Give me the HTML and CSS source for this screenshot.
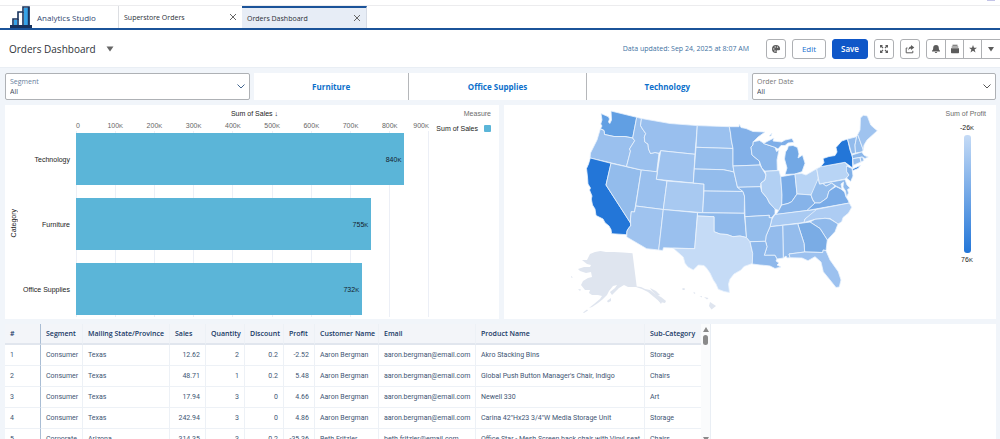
FILE: index.html
```html
<!DOCTYPE html>
<html lang="en">
<head>
<meta charset="utf-8">
<title>Orders Dashboard</title>
<link rel="stylesheet" href="styles.css">
</head>
<body>
<div class="app">
  <div class="topstrip"><span class="avatar"></span></div>
  <nav class="tabs">
    <a class="brand" href="#">
      <svg class="logo" viewBox="0 0 22 22"><path d="M3 19v-6h5v-7h5v-5h6v18" fill="#fff" stroke="#17325c" stroke-width="1.6"/><path d="M4 14h3v5H4zM14 2h4v17h-4z" fill="#36a3e8"/><path d="M8 13v6M13 6v13M18.6 1v19" stroke="#17325c" stroke-width="1.6"/><path d="M0 20.5h22" stroke="#17325c" stroke-width="3"/></svg>
      <span>Analytics Studio</span>
    </a>
    <div class="tab"><a href="#">Superstore Orders</a><button class="close" aria-label="Close Superstore Orders"><svg viewBox="0 0 8 8"><path d="M1 1l6 6M7 1l-6 6"/></svg></button></div>
    <div class="tab tab-active"><a href="#">Orders Dashboard</a><button class="close" aria-label="Close Orders Dashboard"><svg viewBox="0 0 8 8"><path d="M1 1l6 6M7 1l-6 6"/></svg></button></div>
  </nav>
  <header class="header">
    <h1>Orders Dashboard</h1>
    <button class="caret" aria-label="Dashboard menu"><svg viewBox="0 0 8 6"><path d="M.5.5h7L4 5.5z"/></svg></button>
    <span class="updated">Data updated: Sep 24, 2025 at 8:07 AM</span>
    <div class="actions">
      <button class="btn icon" aria-label="Theme"><svg viewBox="0 0 10 10"><path fill-rule="evenodd" d="M5 1a4 4 0 1 0 0 8c1 0 1-.7.7-1.3C5.300 6.900 6 6.200 6.800 6.300c1.300.2 2.300-.2 2.300-1.400C9.100 2.700 7.300 1 5 1zM2.800 4.200a.7.700 0 1 1 0 1.400.7.700 0 0 1 0-1.400zM4.200 2.200a.7.700 0 1 1 0 1.400.7.700 0 0 1 0-1.400zM6.500 2.400a.7.700 0 1 1 0 1.400.7.700 0 0 1 0-1.400zM4 6.300a.7.700 0 1 1 0 1.400.7.700 0 0 1 0-1.400z"/></svg></button>
      <button class="btn edit">Edit</button>
      <button class="btn save">Save</button>
      <button class="btn icon" aria-label="Full screen"><svg viewBox="0 0 10 10"><path d="M1 1h3L1 4zM9 1v3L6 1zM1 9V6l3 3zM9 9H6l3-3z"/><path d="M2 2l2 2M8 2L6 4M2 8l2-2M8 8L6 6" stroke="#5c5c5c" stroke-width="1.200"/></svg></button>
      <button class="btn icon" aria-label="Share"><svg viewBox="0 0 10 10"><path d="M2.500 4H1.200v4.800h6.600V6.800" fill="none" stroke="#5c5c5c"/><path d="M6 1l3.300 2.500L6 6V4.500C4.500 4.500 3.800 5.300 3.400 6.600 3.200 4 4.300 2.700 6 2.500z"/></svg></button>
      <div class="group">
        <button class="icon" aria-label="Notifications"><svg viewBox="0 0 10 10"><path d="M5 1c1.900 0 2.800 1.300 2.800 3 0 1.600.5 2 1.200 2.700V7.500H1V6.700C1.700 6 2.200 5.600 2.200 4c0-1.700.9-3 2.800-3zM3.800 8h2.400C6 9.300 4 9.300 3.800 8z"/></svg></button>
        <button class="icon" aria-label="Collections"><svg viewBox="0 0 10 10"><path d="M2.500.8h5v1h-5zM1.700 2.500h6.600v1H1.700zM1 4.200h8v4.300q0 .7-.7.700H1.700Q1 9.200 1 8.500z"/></svg></button>
        <button class="icon" aria-label="Favorite"><svg viewBox="0 0 10 10"><path d="M5 1l1 2.800h3L6.600 5.500l.9 3L5 6.800l-2.500 1.700.9-3L1 3.800h3z"/></svg></button>
        <button class="icon" aria-label="More"><svg viewBox="0 0 10 10"><path d="M2 3h6L5 7.500z"/></svg></button>
      </div>
    </div>
  </header>
  <main class="main">
    <section class="filters">
      <div class="select segment">
        <label for="segment">Segment</label>
        <select id="segment"><option>All</option></select>
        <svg class="chevron" viewBox="0 0 8 5"><path d="M.5.5L4 4 7.500.5"/></svg>
      </div>
      <div class="toggles">
        <button>Furniture</button><button>Office Supplies</button><button>Technology</button>
      </div>
      <div class="select date">
        <label for="date">Order Date</label>
        <select id="date"><option>All</option></select>
        <svg class="chevron" viewBox="0 0 8 5"><path d="M.5.5L4 4 7.500.5"/></svg>
      </div>
    </section>
    <section class="charts">
      <article class="card sales">
        <div class="ytitle"><span>Category</span></div>
        <div class="cats"><span>Technology</span><span>Furniture</span><span>Office Supplies</span></div>
        <div class="plotcol">
          <div class="xtitle">Sum of Sales&nbsp;↓</div>
          <div class="ticks"><span>0</span><span>100<i>K</i></span><span>200<i>K</i></span><span>300<i>K</i></span><span>400<i>K</i></span><span>500<i>K</i></span><span>600<i>K</i></span><span>700<i>K</i></span><span>800<i>K</i></span><span>900<i>K</i></span></div>
          <div class="plot">
            <div class="bar" style="width:93.300%">840<i>K</i></div>
            <div class="bar" style="width:83.900%">755<i>K</i></div>
            <div class="bar" style="width:81.300%">732<i>K</i></div>
          </div>
        </div>
        <div class="legend"><span class="legend-title">Measure</span><span class="legend-item">Sum of Sales<b class="swatch"></b></span></div>
      </article>
      <article class="card profit">
        <svg class="map" viewBox="568 108 312 208" role="img" aria-label="Sum of Profit by state">
          <g class="states">
            <path fill="#619fe3" d="M601 113.500L608.500 116.800 609.500 119 608.500 122 609.800 123.500 611.500 120 611 111 636.700 117.300 632.700 138 625 136.500 614 136.500 607 135 604.500 134.500 604 130.500 600.500 128.500 602 126 600.700 124 602 120z"/>
            <path d="M600.300 129L604 130.500 604.500 134.500 607 135 614 136.500 625 136.500 632.700 138 634.700 140.700 629.500 149 630.500 151 626.500 166.500 590 158 590.500 153 597 140z"/>
            <path fill="#2376d8" d="M590.300 158L611 163.300 606 185 630.700 223.300 630.700 226 629 227.500 627 231 626.700 234.700 611.700 233.700 611 229.500 609 226 605 222.700 603 219 596 215.500 595 209 592.500 205 591.300 199 592 196 589.500 190 590.500 188 588 184 587.500 177 586.500 168.500 588.500 164z"/>
            <path fill="#93bcec" d="M611 163.300L641.300 170 634.500 212 631.300 211.700 630.500 219 630.700 223.300 606 185z"/>
            <path d="M636.700 117.300L641.500 118.500 640.500 125.500 642.500 129 645.700 133.500 644.300 137 644.800 142 648 144 648.500 149 650.500 153.500 655 152.500 659 153.300 656.700 172 641.300 170 626.500 166.500 630.500 151 629.500 149 634.700 140.700 632.700 138z"/>
            <path fill="#99bfee" d="M641.500 118.500L670 123.500 697.300 125.600 695 154.300 660.700 150.700 659.300 153.300 655 152.500 650.500 153.500 648.500 149 648 144 644.800 142 644.300 137 645.700 133.500 642.500 129 640.500 125.500z"/>
            <path fill="#9fc3ef" d="M660.700 150.700L695 154.300 693.300 183 656.300 179.300z"/>
            <path d="M641.300 170L657.300 171.800 656.300 179.300 667 181 663.300 209.500 635.700 206z"/>
            <path fill="#a8c9f1" d="M667 181L704 184 702.700 212.700 663.300 209.500z"/>
            <path fill="#9fc3ef" d="M635.700 206L663.300 209.500 658.700 250 646.700 248.700 626.700 237 627 231 629 227.500 630.700 226 630.500 219 631.300 211.700 634.500 212z"/>
            <path d="M663.300 209.500L697.500 212.700 694.700 248.700 663.500 247.700 662.700 250.500 658.700 250z"/>
            <path fill="#9bc1ef" d="M697.300 125.600L729.300 126.700 730.500 133 731.300 140 733 148.500 696 147.300z"/>
            <path fill="#95bdec" d="M696 147.300L733 148.500 733 166 734 172 729.500 171 723.300 169.700 694.300 169z"/>
            <path fill="#93bcec" d="M694.300 169L723.300 169.700 729.500 171 734 172 737.500 187.300 743 191.500 704 191 704 184 693.300 183z"/>
            <path d="M704 191L743 191.500 744.500 196 744.300 213.300 702.700 212.700z"/>
            <path fill="#8fb9eb" d="M697.500 212.700L744.300 213.300 746.500 237.500 740 236 733 236.700 727 234.500 720 234 714 231.700 714 216.700 697.500 216z"/>
            <path fill="#c5dbf6" d="M697.500 216L714 216.700 714 231.700 720 234 727 234.500 733 236.700 740 236 746.500 237.500 750 241.700 752.700 253.300 752.300 263.500 744 266.500 741 270 734 274 730 279 728.500 284 729.500 292.500 724 291.500 718.300 289.300 716 284 713.300 280 710 273 706.700 268.300 704 265.500 698.300 265 693.300 270 688 267 685 263.300 683.300 257 673.300 248.300 694.700 248.700z"/>
            <path fill="#82b0e8" d="M729.300 126.700L739 126.700 739.300 124 741 127.500 746 128.500 753 131.500 765 132 758 137 753.300 141.700 753 145 751 147 752 155 759.300 161 760 165 733 166 733 148.500 731.300 140 730.500 133z"/>
            <path fill="#8ab6ea" d="M753.300 141.700L759.500 140.500 765 144 775 147.300 776.500 151.500 779 150 777 160 777.300 170.500 765 171.300 761.700 168 759.300 161 752 155 751 147 753 145z"/>
            <path fill="#7eaee8" d="M763.500 143.500L768 141 774 138 773 141 781.700 142 785 140 792 138.500 794 142.300 788 143 785 145.500 781 145.500 778 149 775 147.300zM769 136L772 133 771 136z"/>
            <path fill="#72a8e5" d="M788.300 146L793 145.500 797.500 147.500 799 154 798 158 802.500 155 805 163.300 802 171.700 795 174 785 174.500 787 168 784.500 159 785.500 152 787.500 149z"/>
            <path d="M733 166L760 165 761.700 168 766 175 765 180 761 183 760.500 186.700 737.500 187.300 734 172z"/>
            <path fill="#89b5ea" d="M737.500 187.300L760.500 186.700 761.700 191.700 767 198 769.500 203 775 208.500 775 213.500 771.500 218 769 217.500 769.300 215.300 745 216.700 744.500 196 743 191.500z"/>
            <path fill="#b2d0f3" d="M765 171.300L779 170.500 780.700 176.700 782 195 781.700 204 779 210.500 775 209 769.500 203 767 198 761.700 191.700 761 183 765 180 766 175z"/>
            <path fill="#7aace7" d="M780.700 176.700L795 174.300 797 194 791.700 201.700 788 203.500 781.700 205 782 195z"/>
            <path fill="#b8d4f5" d="M795 174L801.700 173.500 806 175 816.700 168.700 818.300 178.300 817 185 811 195 805 194.500 797 194z"/>
            <path fill="#86b3e9" d="M776 214.500L779 210 781.700 205 788 203.500 791.700 201.700 797 194 805 194.500 811 195 812.700 200 815 203 807 210.500z"/>
            <path fill="#a9caf2" d="M775 214.500L816.700 209.300 814 213 805 219 804 222.500 770 226.700 772 219z"/>
            <path fill="#93bcec" d="M818.300 178.300L819.500 184 823 183.500 826 186 831.700 183 835 186 829 191 827 198 820 203 815 203 812.700 199.500 811 195z"/>
            <path fill="#79abe7" d="M807 210.500L815 203 820 203 827 198 829 191 836 186.500 841 189 844.500 192 846 197 848 200 849.300 203z"/>
            <path fill="#adccf3" d="M816.700 209.300L849.300 203 851.700 207.300 848.500 213 843 217.500 841.700 221.700 838 224 830 218.500 825 218.300 815 219.300 804 222.500 805 219z"/>
            <path fill="#8fb9eb" d="M810 222L815 219.300 825 218.300 830 219 838 224 835 231.700 827.300 240 820 228.500z"/>
            <path fill="#7aace5" d="M797.700 223.700L810 222 820 228.500 827.300 240 826 250.700 823.300 250 822.700 252.500 804.700 252 804 243.300z"/>
            <path fill="#94bcec" d="M782.700 225.300L797.700 223.700 804 243.300 804.700 252 789 254 790 257.700 787 258 786 256 783.300 258z"/>
            <path fill="#93bbec" d="M770 226.700L782.700 225.300 783.300 258 777 259 775 255.300 764.300 255.300 767 246.700 765.500 241 766 236z"/>
            <path fill="#94bdec" d="M745 216.700L769.300 215.300 769 217.500 772 218 770 226.700 766 236 765.500 241.300 750 241.700 746.500 237.500z"/>
            <path fill="#8eb8eb" d="M750 241.700L765.500 241.300 767 246.700 764.300 255.300 775 255.300 777 259 776 261 779 263 777 265 781 267 775 268.500 770 266 766 265.500 760 265 752.300 264 752.700 253.300z"/>
            <path fill="#9cc1ef" d="M789 254L804.700 252 822.700 252.500 823.300 250 826 250.700 830 260 838.300 271.700 841 280 839.300 287 836 287.500 830 280 823.300 271.700 821 262 815 256.700 808 260.700 802 258 790 257.700z"/>
            <path fill="#b8d4f5" d="M816.700 168.700L820.700 166.700 845 162.300 848 166 846.700 171.700 849 175 845 179 819.500 184z"/>
            <path fill="#2376d8" d="M820.700 166.700L824 162.500 823 158.500 829 156.500 835 155.500 837 152 836 147.500 841.700 141 847.500 139 850 150 852.500 157 852.700 168 845 162.300zM852.500 169L860.500 165.500 858 168.500 853 170.500z"/>
            <path fill="#82b1e8" d="M846.500 166L852 168.500 853 176 850.700 181.500 846.500 178 849 175 846.700 171.700z"/>
            <path fill="#8fb9eb" d="M823 183.500L845 179.500 847 185 850 188 847.500 189.500 848.500 193 846.500 197 845.500 191 843 187 843.500 182 841 184 842 189 836 186 831.700 183 826 186z"/>
            <path fill="#92bbec" d="M847.500 139L856.700 136.700 855 145 855.500 153 851.700 154z"/>
            <path fill="#95bdec" d="M856.700 136.700L857.700 134.500 863.300 150 861.700 152 855.500 153 855 145z"/>
            <path fill="#9fc3ef" d="M857.700 134.500L860 130 860.500 118 863.300 115.200 867.300 116 870.700 125 874 128 877.300 130.700 872 135.500 867 140 864 145 863.300 150z"/>
            <path fill="#8cb7ea" d="M852 155L861.700 152 864.300 155.500 868.300 157 865 158.500 862 157 852.700 158.700z"/>
            <path fill="#98bfed" d="M852.700 158.700L860 157.500 861 162 853.300 165.300zM860 157.500L862.500 157 864 160.500 861 162z"/>
          </g>
          <g fill="#dfe5ef">
            <path d="M590 254L595 252 600.500 251 606 252 614 252 623 252.500 632.500 253.300 636.700 286.500 641 287 645 289 650 290 655 294 661 297 666 301 665 303 660 302 654 297 648 292 642 289 636 287 628 287 624 285 619 288 616 291 612 295 610 292 615 288 617 285 613 286 609 291 607 295 603 299 598 303 592 307 589 308 594 304 600 299 602 296 598 295 592 295 589 293 590 290 585 290 581 285 583 281 588 278 592 277 591 272 586 273 580 271 578 269 584 267 590 267 591 265 587 264 582 260 587 260 588 258z"/>
            <path d="M583 312.500L587 309.500 588 310.500 584 313zM607 301L611 298 611 301 608 302.500zM578 289L581 289.500 580 291zM571 276L573 277.500 571 277.500zM650 288L656 291 660 295 657 296 652 291zM658 300L662 302 661 304z"/>
            <path d="M682.500 288L685 288.500 684.500 290 682.500 290zM693.500 291.700L695.500 293 694 294zM699.500 296L702 296.300 702 297.500zM704 297L708.500 298 707 299.500zM710 302L716 306 711.500 309.500 709 306z"/>
          </g>
        </svg>
        <div class="scale"><span class="legend-title">Sum of Profit</span><div class="scale-body"><span>-26<i>K</i></span><div class="ramp"></div><span>76<i>K</i></span></div></div>
      </article>
    </section>
    <section class="card tablecard">
      <table>
        <colgroup><col class="c36"><col class="c42"><col class="c87"><col class="c36"><col class="c39"><col class="c39"><col class="c31"><col class="c64"><col class="c97"><col class="c169"><col class="c56"></colgroup>
        <thead><tr><th>#</th><th>Segment</th><th>Mailing State/Province</th><th>Sales</th><th class="n">Quantity</th><th class="n">Discount</th><th>Profit</th><th>Customer Name</th><th>Email</th><th>Product Name</th><th>Sub-Category</th></tr></thead>
        <tbody>
          <tr><td>1</td><td>Consumer</td><td>Texas</td><td class="n">12.62</td><td class="n">2</td><td class="n">0.2</td><td class="n">-2.52</td><td>Aaron Bergman</td><td>aaron.bergman@email.com</td><td>Akro Stacking Bins</td><td>Storage</td></tr>
          <tr><td>2</td><td>Consumer</td><td>Texas</td><td class="n">48.71</td><td class="n">1</td><td class="n">0.2</td><td class="n">5.48</td><td>Aaron Bergman</td><td>aaron.bergman@email.com</td><td>Global Push Button Manager's Chair, Indigo</td><td>Chairs</td></tr>
          <tr><td>3</td><td>Consumer</td><td>Texas</td><td class="n">17.94</td><td class="n">3</td><td class="n">0</td><td class="n">4.66</td><td>Aaron Bergman</td><td>aaron.bergman@email.com</td><td>Newell 330</td><td>Art</td></tr>
          <tr><td>4</td><td>Consumer</td><td>Texas</td><td class="n">242.94</td><td class="n">3</td><td class="n">0</td><td class="n">4.86</td><td>Aaron Bergman</td><td>aaron.bergman@email.com</td><td>Carina 42"Hx23 3/4"W Media Storage Unit</td><td>Storage</td></tr>
          <tr><td>5</td><td>Corporate</td><td>Arizona</td><td class="n">314.35</td><td class="n">3</td><td class="n">0.2</td><td class="n">-35.36</td><td>Beth Fritzler</td><td>beth.fritzler@email.com</td><td>Office Star - Mesh Screen back chair with Vinyl seat</td><td>Chairs</td></tr>
        </tbody>
      </table>
      <div class="scroll"><svg viewBox="0 0 6 5"><path d="M3 0l3 5H0z"/></svg><div class="thumb"></div><svg class="down" viewBox="0 0 6 5"><path d="M0 0h6L3 5z"/></svg></div>
    </section>
  </main>
</div>
</body>
</html>
```
FILE: styles.css
```css
* { box-sizing: border-box; }
body { margin: 0; font-family: "Open Sans", "Noto Sans", sans-serif; font-size: 8px; color: #3e5573; background: #f1f5fa; }
button, select { font: inherit; color: inherit; margin: 0; padding: 0; border: 0; background: none; }
a { color: inherit; text-decoration: none; }
svg { display: block; }
i { font-style: normal; font-size: 6px; }
.app { height: 100vh; overflow: hidden; display: flex; flex-direction: column; }
.topstrip { height: 6px; flex: none; background: #fff; border-bottom: 1px solid #ececee; display: flex; justify-content: flex-end; padding-right: 5px; }
.avatar { width: 8px; height: 1px; background: #c3c4e8; }
.tabs { height: 24px; flex: none; background: #fff; border-bottom: 2px solid #1b5399; display: flex; }
.brand { width: 118px; padding-left: 10px; display: flex; align-items: center; gap: 5px; color: #32476f; }
.logo { width: 22px; height: 22px; }
.tab { width: 124px; display: flex; align-items: center; justify-content: space-between; padding: 0 5px; border-left: 1px solid #dcdee2; color: #2b2f36; font-size: 7px; }
.tab-active { width: 125px; background: #e7edf6; border-left: 0; border-top: 2px solid #1b5399; border-right: 1px solid #d5dbe5; }
.close svg { width: 8px; height: 8px; stroke: #666; fill: none; }
.header { height: 38px; flex: none; background: #fff; display: flex; align-items: center; padding-left: 9px; border-bottom: 1px solid #e9eef4; }
h1 { margin: 0; font-size: 10px; font-weight: 400; color: #2f3338; }
.caret { margin-left: 10px; }
.caret svg { width: 8px; height: 6px; fill: #666; }
.updated { margin-left: auto; color: #41719f; font-size: 7px; }
.actions { display: flex; gap: 6px; margin-left: 17px; }
.btn, .group { height: 20px; border: 1px solid #aeb0b3; border-radius: 3px; }
.btn.icon { width: 20px; }
.icon { display: flex; align-items: center; justify-content: center; }
.icon svg { width: 10px; height: 10px; fill: #5c5c5c; }
.edit { width: 34px; color: #1c6fd0; }
.save { width: 36px; color: #fff; background: #0f57c8; border-color: #0f57c8; font-weight: 600; }
.group { display: flex; margin-right: -1px; border-radius: 3px 0 0 3px; }
.group .icon { width: 18px; }
.group .icon:last-child { width: 19px; }
.group .icon + .icon { border-left: 1px solid #aeb0b3; }
.main { flex: 1; min-height: 0; padding: 5px 4px 0 5px; display: flex; flex-direction: column; gap: 5px; }
.filters { display: grid; grid-template-columns: 245fr 494fr 244fr; gap: 4px; height: 27px; flex: none; }
.select { position: relative; background: #fff; border: 1px solid #aeb1b5; border-radius: 2px; padding: 3px 4px; display: flex; flex-direction: column; justify-content: center; }
.select label { font-size: 7px; line-height: 10px; color: #67809d; }
.date label { color: #777; }
.select select { appearance: none; font-size: 7px; line-height: 9px; height: 9px; width: 100%; color: #444c58; }
.chevron { position: absolute; right: 4px; top: 10px; width: 8px; height: 5px; fill: none; stroke: #42658e; pointer-events: none; }
.date .chevron { stroke: #555; }
.toggles { display: grid; grid-template-columns: 154fr 177fr 162fr; background: #fff; }
.toggles button { color: #0c6fcb; font-weight: 700; }
.toggles button + button { border-left: 1px solid #b5b7ba; }
.charts { display: grid; grid-template-columns: 494fr 492fr; gap: 5px; height: 214px; flex: none; }
.card { background: #fff; min-width: 0; }
.sales, .profit { display: flex; font-family: "Liberation Sans", sans-serif; font-size: 7px; color: #222; }
.ytitle { width: 16px; display: flex; align-items: center; justify-content: center; padding-top: 23px; }
.ytitle span { writing-mode: vertical-rl; transform: rotate(180deg); }
.cats { width: 49px; margin-right: 6px; padding-top: 28px; height: 210px; display: grid; grid-template-rows: repeat(3, 52px); gap: 13px; align-items: center; justify-items: end; white-space: nowrap; }
.plotcol { flex: 1; display: flex; flex-direction: column; }
.xtitle { text-align: center; height: 16px; line-height: 17px; padding-left: 4px; }
.ticks { display: flex; justify-content: space-between; color: #666; height: 10px; line-height: 10px; }
.ticks span { width: 0; display: flex; justify-content: center; align-items: baseline; }
.ticks span:first-child { justify-content: flex-start; }
.ticks span:last-child { justify-content: flex-end; }
.plot { margin-bottom: 2px; padding-top: 2px; flex: 1; display: flex; flex-direction: column; gap: 13px; border-right: 1px solid #eceff6; background: repeating-linear-gradient(90deg, #eceff6 0 1px, transparent 1px calc(100% / 9)); }
.bar { height: 52px; background: #5bb5d8; display: flex; align-items: center; justify-content: flex-end; padding-right: 3px; color: #14202c; }
.bar i { padding-top: 1px; }
.legend { width: 70px; padding: 4px 8px 0 0; display: flex; flex-direction: column; align-items: flex-end; gap: 6px; white-space: nowrap; }
.legend-title { color: #6c6c6c; line-height: 9px; }
.legend-item { display: flex; align-items: center; gap: 6px; line-height: 9px; }
.swatch { width: 7px; height: 7px; border-radius: 1px; background: #5bb5d8; }
.profit { justify-content: space-between; padding: 3px 10px 3px 64px; }
.map { flex: 0 1 312px; min-width: 0; height: 208px; }
.states path { stroke: #eaf2fc; stroke-width: .8; stroke-linejoin: round; }
.states { fill: #9ac0ee; }
.scale { width: 50px; display: flex; flex-direction: column; gap: 6px; padding-top: 1px; align-items: flex-end; white-space: nowrap; }
.scale-body { width: 38px; display: flex; flex-direction: column; align-items: center; gap: 3px; line-height: 8px; }
.ramp { width: 7px; height: 118px; border-radius: 3px; background: linear-gradient(#c5dbf6, #2376d8); }
.tablecard { flex: 1; min-height: 0; overflow: hidden; display: flex; }
table { border-collapse: separate; border-spacing: 0; table-layout: fixed; width: 696px; font-size: 7px; align-self: flex-start; }
th, td { height: 21px; padding: 0 5px; text-align: left; white-space: nowrap; border-right: 1px solid #edf1f6; border-bottom: 1px solid #edf1f6; }
th { background: #f3f5f9; color: #173764; font-weight: 600; border-bottom: 2px solid #e1e6ee; }
td { font-family: Roboto, "Open Sans", sans-serif; }
th:first-child, td:first-child { border-right-color: #a9bdd4; }
th:last-child, td:last-child { border-right: 0; }
.n { text-align: right; }
.c31 { width: 31px; } .c36 { width: 36px; } .c39 { width: 39px; } .c42 { width: 42px; } .c56 { width: 56px; }
.c64 { width: 64px; } .c87 { width: 87px; } .c97 { width: 97px; } .c169 { width: 169px; }
.scroll { width: 10px; padding-top: 3px; display: flex; flex-direction: column; align-items: center; gap: 3px; background: #fafbfc; border-right: 1px solid #e9eef4; }
.scroll svg { width: 6px; height: 5px; fill: #8a8a8a; flex: none; }
.scroll .down { margin: auto 0 -3px; }
.thumb { width: 5px; height: 10px; border-radius: 3px; background: #8a8a8a; flex: none; }
```
